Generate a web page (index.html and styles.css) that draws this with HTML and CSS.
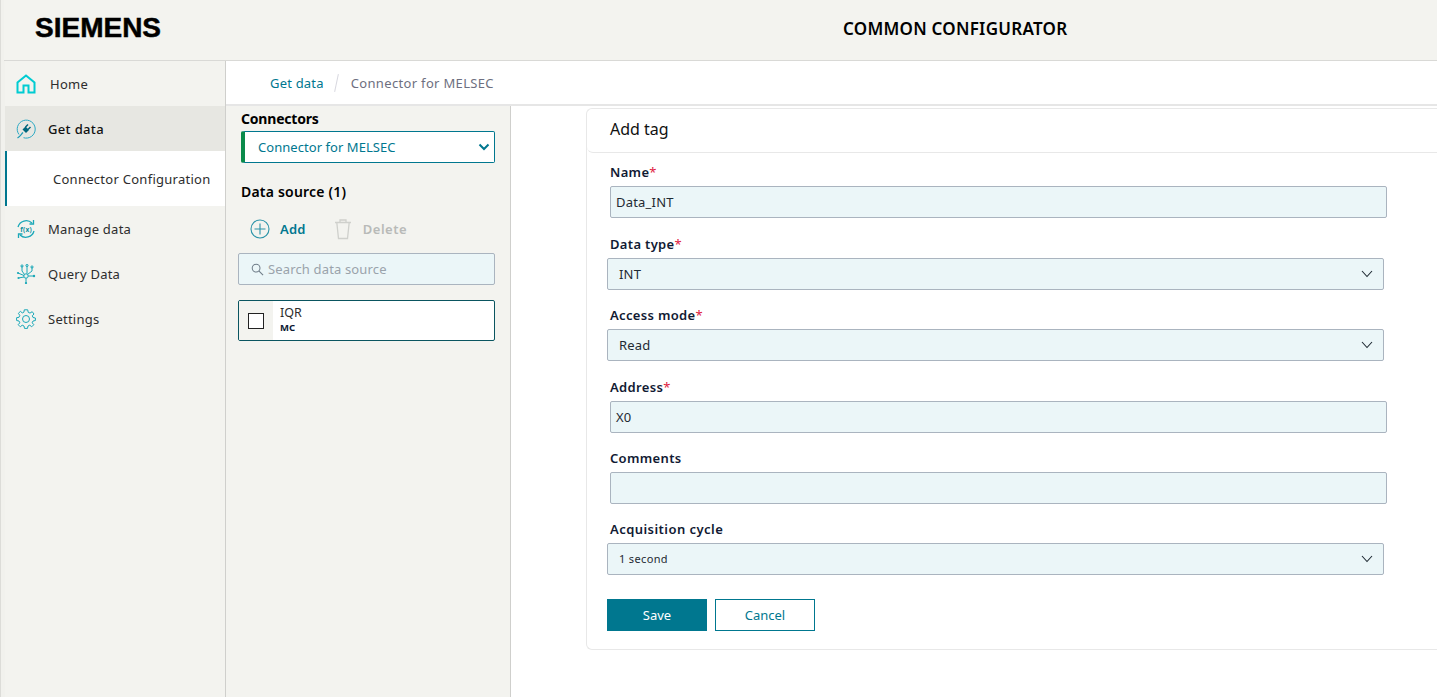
FILE: index.html
```html
<!DOCTYPE html>
<html lang="en">
<head>
<meta charset="utf-8">
<title>Common Configurator</title>
<link rel="stylesheet" href="styles.css">
</head>
<body>
<div class="app">
  <header class="topbar">
    <div class="logo">SIEMENS</div>
    <div class="app-title">COMMON CONFIGURATOR</div>
  </header>
  <div class="shell">
    <nav class="sidebar">
      <a class="nav-item nav-home">
        <svg class="nav-icon" viewBox="0 0 20 20" width="20" height="20"><path d="M1.500 18.500V8.500L10 1.500L18.500 8.500V18.500H12.500V11.500H7.500V18.500Z" fill="none" stroke="#00ccd2" stroke-width="2"/></svg>
        <span>Home</span>
      </a>
      <a class="nav-item nav-active">
        <svg class="nav-icon" viewBox="0 0 20 20" width="20" height="20"><path d="M3 15.500A9 9 0 1 1 7.500 18.700" fill="none" stroke="#2aa9c4" stroke-width="1"/><path d="M1.500 19C4 17.500 5 15.500 7 13.500" fill="none" stroke="#1b9ab5" stroke-width="1.200"/><path d="M6.500 10.500L9.500 7.500L13 11L10 14Z" fill="#00667c"/><path d="M9.500 8L12 5.500M12 10.500L14.500 8" stroke="#00667c" stroke-width="1.500"/></svg>
        <span>Get data</span>
      </a>
      <a class="nav-sub">Connector Configuration</a>
      <a class="nav-item">
        <svg class="nav-icon" viewBox="0 0 20 20" width="20" height="20"><path d="M2 8A8.500 8.500 0 0 1 16 4M18 12A8.500 8.500 0 0 1 4 16" fill="none" stroke="#1ba8b8" stroke-width="1.300"/><path d="M17.500 1V5H13.500M2.500 19V15H6.500" fill="none" stroke="#1ba8b8" stroke-width="1.300"/><text x="10" y="12.500" class="fx">f(x)</text></svg>
        <span>Manage data</span>
      </a>
      <a class="nav-item">
        <svg class="nav-icon" viewBox="0 0 20 20" width="20" height="20"><g fill="none" stroke="#1ba8b8" stroke-width="1"><circle cx="10" cy="12" r="2.200"/><path d="M6 2V7L8.500 10.500M11 1.500V9.800M16 3V7L11.500 10.500M2 9L8 11.500M2.500 14L8 13M12.200 12H18M10 14.200V19"/></g><g fill="none" stroke="#1ba8b8" stroke-width="1"><circle cx="6" cy="2" r="1.100"/><circle cx="11" cy="1.500" r="1.100"/><circle cx="16" cy="3" r="1.100"/></g><g fill="#1ba8b8"><circle cx="2" cy="9" r="1.100"/><circle cx="2.500" cy="14" r="1.100"/><circle cx="18" cy="12" r="1.200"/><circle cx="10" cy="19" r="1.100"/></g></svg>
        <span>Query Data</span>
      </a>
      <a class="nav-item">
        <svg class="nav-icon" viewBox="0 0 20 20" width="20" height="20"><circle cx="10" cy="10" r="3.500" fill="none" stroke="#1ba8b8" stroke-width="1"/><path d="M8.300 .8H11.700L12.200 3.300L14 4.100L16.200 2.700L18 5L16.300 6.800L17 8.500L19.400 9V11.500L17 12L16.200 13.800L17.800 15.700L15.700 17.800L13.800 16.200L12 17L11.500 19.400H8.500L8 17L6.200 16.200L4.300 17.800L2.200 15.700L3.800 13.800L3 12L.6 11.500V8.700L3 8.300L3.800 6.300L2.300 4.400L4.400 2.400L6.300 3.900L7.900 3.200Z" fill="none" stroke="#1ba8b8" stroke-width="1"/></svg>
        <span>Settings</span>
      </a>
    </nav>
    <main class="content">
      <div class="breadcrumb">
        <a class="crumb-link">Get data</a>
        <span class="crumb-sep"></span>
        <span class="crumb-current">Connector for MELSEC</span>
      </div>
      <div class="workspace">
        <section class="sources">
          <h2 class="panel-label panel-connectors">Connectors</h2>
          <div class="connector-select">
            <span>Connector for MELSEC</span>
            <svg viewBox="0 0 12 8" width="12" height="8"><path d="M1.500 1.500L6 6L10.500 1.500" fill="none" stroke="#00778f" stroke-width="2"/></svg>
          </div>
          <h2 class="panel-label source-count">Data source (1)</h2>
          <div class="actions">
            <button class="action action-add">
              <svg viewBox="0 0 20 20" width="20" height="20"><circle cx="10" cy="10" r="9" fill="none" stroke="#2a93a8" stroke-width="1.100"/><path d="M10 4.500V15.500M4.500 10H15.500" stroke="#2a93a8" stroke-width="1.100"/></svg>
              <span>Add</span>
            </button>
            <button class="action action-delete">
              <svg viewBox="0 0 20 22" width="20" height="22"><path d="M2 4.500H18M7 4.500V2H13V4.500M3.800 4.500L5.500 20.500H14.500L16.200 4.500" fill="none" stroke="#cfd0cc" stroke-width="1.300"/></svg>
              <span>Delete</span>
            </button>
          </div>
          <div class="search">
            <svg viewBox="0 0 14 14" width="13" height="13"><circle cx="5.500" cy="5.500" r="4.200" fill="none" stroke="#6f7c88" stroke-width="1.100"/><path d="M8.700 8.700L13 13" stroke="#6f7c88" stroke-width="1.100"/></svg>
            <span>Search data source</span>
          </div>
          <div class="source-card">
            <div class="check-cell"><span class="checkbox"></span></div>
            <div class="source-text">
              <div class="source-name">IQR</div>
              <div class="source-type">MC</div>
            </div>
          </div>
        </section>
        <section class="form-area">
          <div class="card">
            <div class="card-head">Add tag</div>
            <form class="tag-form">
              <div class="field">
                <label class="field-label">Name<em>*</em></label>
                <div class="input">Data_INT</div>
              </div>
              <div class="field">
                <label class="field-label">Data type<em>*</em></label>
                <div class="input select"><span>INT</span><svg viewBox="0 0 12 8" width="12" height="8"><path d="M1 1L6 6.500L11 1" fill="none" stroke="#1f2a33" stroke-width="1.100"/></svg></div>
              </div>
              <div class="field">
                <label class="field-label">Access mode<em>*</em></label>
                <div class="input select"><span>Read</span><svg viewBox="0 0 12 8" width="12" height="8"><path d="M1 1L6 6.500L11 1" fill="none" stroke="#1f2a33" stroke-width="1.100"/></svg></div>
              </div>
              <div class="field">
                <label class="field-label">Address<em>*</em></label>
                <div class="input">X0</div>
              </div>
              <div class="field">
                <label class="field-label">Comments</label>
                <div class="input"></div>
              </div>
              <div class="field">
                <label class="field-label label-wide">Acquisition cycle</label>
                <div class="input select select-small"><span>1 second</span><svg viewBox="0 0 12 8" width="12" height="8"><path d="M1 1L6 6.500L11 1" fill="none" stroke="#1f2a33" stroke-width="1.100"/></svg></div>
              </div>
              <div class="buttons">
                <button type="button" class="btn btn-primary">Save</button>
                <button type="button" class="btn btn-outline">Cancel</button>
              </div>
            </form>
          </div>
        </section>
      </div>
    </main>
  </div>
</div>
</body>
</html>
```
FILE: styles.css
```css
* { box-sizing: border-box; }
html, body { margin: 0; height: 100%; overflow: hidden; }
body { background: #fff; font-family: "Noto Sans", sans-serif; font-size: 13px; color: #1f2a33; }
.app { height: 697px; display: flex; flex-direction: column; border-left: 1px solid #dcdcd8; padding-left: 4px; background: linear-gradient(90deg, #f1f1ed 0, #f1f1ed 4px, #fff 4px); }
.topbar { height: 61px; flex: none; display: flex; align-items: center; background: #f3f3ef; border-bottom: 1px solid #d9d9d6; margin-left: -1px; padding: 0 0 4px 31px; }
.logo { width: 126px; font-family: "Liberation Sans", sans-serif; font-weight: 700; font-size: 28px; color: #000; -webkit-text-stroke: .5px #000; }
.app-title { margin-left: 682px; font-size: 17px; font-weight: 600; letter-spacing: .26px; color: #000; white-space: nowrap; }
.shell { flex: 1; display: flex; min-height: 0; }
.sidebar { width: 221px; flex: none; background: #f3f3ef; border-right: 1px solid #cfcfcc; }
.nav-item { height: 45px; display: flex; align-items: center; gap: 12px; padding-left: 11px; color: #2d2d2d; letter-spacing: .25px; }
.nav-home { gap: 14px; }
.nav-active { background: #e7e7e2; color: #111; font-weight: 500; letter-spacing: .35px; }
.nav-sub { height: 55px; display: flex; align-items: center; padding-left: 46px; background: #fff; border-left: 2px solid #00778f; color: #2d2d2d; letter-spacing: .27px; }
.nav-icon { flex: none; }
.fx { font-size: 6.500px; font-family: "Noto Sans", sans-serif; fill: #0e8fa0; text-anchor: middle; font-weight: 700; }
.content { flex: 1; display: flex; flex-direction: column; min-width: 0; }
.breadcrumb { height: 45px; flex: none; display: flex; align-items: center; padding-left: 44px; border-bottom: 2px solid #e6e6e6; background: #fff; }
.crumb-link { color: #00778f; letter-spacing: .2px; }
.crumb-sep { width: 1px; height: 18px; margin: 0 14px 0 12px; background: #d8d8e0; transform: rotate(12deg); }
.crumb-current { color: #6d6f80; letter-spacing: .33px; }
.workspace { flex: 1; display: flex; min-height: 0; }
.sources { width: 285px; flex: none; background: #f3f3ef; border-right: 1px solid #cfcfcc; padding: 3px 15px 0 12px; }
.panel-label { margin: 0; padding-left: 3px; font-size: 14px; line-height: 20px; font-weight: 600; letter-spacing: .2px; color: #000; }
.panel-connectors { letter-spacing: -.2px; font-weight: 700; }
.connector-select { height: 32px; margin: 2px 0 0 3px; display: flex; align-items: center; justify-content: space-between; padding: 0 4px 0 13px; background: #fff; border: 1px solid #00778f; border-left: 4px solid #0a8a4a; border-radius: 2px; color: #00778f; letter-spacing: .05px; }
.source-count { margin-top: 19px; }
.actions { display: flex; gap: 27px; margin-top: 15px; padding-left: 12px; }
.action { display: flex; align-items: center; gap: 10px; height: 24px; padding: 0; border: 0; background: none; font: 600 13px "Noto Sans", sans-serif; letter-spacing: .25px; }
.action-add { color: #00778f; }
.action-delete { color: #b8bab8; letter-spacing: .5px; }
.search { height: 32px; margin-top: 12px; display: flex; align-items: center; gap: 4px; padding-left: 12px; background: #ebf6f8; border: 1px solid #aab4bf; border-radius: 2px; color: #9aa3ab; letter-spacing: .15px; }
.source-card { height: 41px; margin-top: 15px; display: flex; background: #fff; border: 1px solid #0a5560; border-radius: 2px; overflow: hidden; }
.check-cell { width: 34px; display: flex; align-items: center; justify-content: center; background: #f3f3ef; }
.checkbox { width: 16px; height: 16px; border: 1.500px solid #222; background: #fff; }
.source-text { padding: 3px 0 0 7px; }
.source-name { font-size: 12.500px; line-height: 17px; color: #2d2d2d; }
.source-type { font-size: 9.500px; line-height: 13px; font-weight: 700; color: #0b1a33; }
.form-area { flex: 1; padding: 2px 0 0 75px; min-width: 0; }
.card { height: 542px; border: 1px solid #e8e8e8; border-right: 0; border-radius: 6px 0 0 6px; }
.card-head { height: 44px; display: flex; align-items: center; padding: 0 0 4px 23px; font-size: 16px; color: #111; border-bottom: 1px solid #e8e8e8; border-radius: 0 0 0 6px; }
.tag-form { padding: 9.450px 0 0 20px; display: flex; flex-direction: column; }
.field { height: 71.400px; display: flex; flex-direction: column; }
.field-label { height: 24px; padding-left: 3px; line-height: 20px; font-size: 13px; font-weight: 600; letter-spacing: .33px; color: #111a33; }
.label-wide { letter-spacing: .45px; }
.field-label em { font-style: normal; font-weight: 400; color: #e0203f; }
.input { width: 777px; height: 32px; margin-left: 3px; display: flex; align-items: center; padding-left: 5px; background: #ebf6f8; border: 1px solid #aab4bf; border-radius: 2px; letter-spacing: .2px; color: #1f2a33; }
.select { margin-left: 0; padding: 0 10px 0 11px; justify-content: space-between; }
.select-small { font-size: 11px; letter-spacing: .35px; padding-bottom: 1px; }
.buttons { display: flex; gap: 8px; margin-top: 8px; }
.btn { width: 100px; height: 32px; font: 13px "Noto Sans", sans-serif; border: 1px solid #00778f; }
.btn-primary { background: #00778f; color: #fff; }
.btn-outline { background: #fff; color: #00778f; }
```
